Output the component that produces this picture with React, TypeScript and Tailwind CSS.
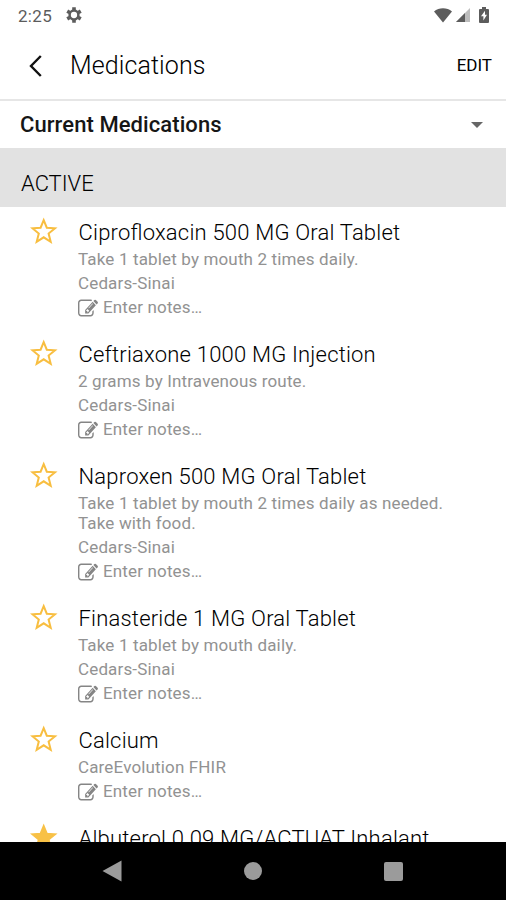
import React from "react";

interface Medication {
  name: string;
  instructions?: string;
  source?: string;
  favorite?: boolean;
}

const medications: Medication[] = [
  {
    name: "Ciprofloxacin 500 MG Oral Tablet",
    instructions: "Take 1 tablet by mouth 2 times daily.",
    source: "Cedars-Sinai",
  },
  {
    name: "Ceftriaxone 1000 MG Injection",
    instructions: "2 grams by Intravenous route.",
    source: "Cedars-Sinai",
  },
  {
    name: "Naproxen 500 MG Oral Tablet",
    instructions: "Take 1 tablet by mouth 2 times daily as needed. Take with food.",
    source: "Cedars-Sinai",
  },
  {
    name: "Finasteride 1 MG Oral Tablet",
    instructions: "Take 1 tablet by mouth daily.",
    source: "Cedars-Sinai",
  },
  { name: "Calcium", source: "CareEvolution FHIR" },
  { name: "Albuterol 0.09 MG/ACTUAT Inhalant", favorite: true },
];

const Star = ({ filled }: { filled?: boolean }) => (
  <svg
    viewBox="0 0 28 28"
    className="-mt-0.5 h-7 w-7 shrink-0"
    fill={filled ? "#f8c146" : "none"}
    stroke={filled ? "#f8c146" : "#f8be40"}
    strokeWidth="2"
  >
    <path d="M13.7 3.2 16.8 10.7 25 11.3 18.6 16.6 20.7 24.8 13.7 20.3 6.7 24.8 8.8 16.6 2.4 11.3 10.6 10.7Z" />
  </svg>
);

const EditIcon = () => (
  <svg viewBox="0 0 1792 1664" preserveAspectRatio="none" className="mt-[2px] h-5 w-5 shrink-0" fill="#858585">
    <path d="M888 1184l116-116-152-152-116 116v56h96v96h56zm440-720q-16-16-33 1l-350 350q-17 17-1 33t33-1l350-350q17-17 1-33zm80 594v190q0 119-84.5 203.5t-203.5 84.5h-832q-119 0-203.5-84.5t-84.5-203.5v-832q0-119 84.5-203.5t203.5-84.5h832q63 0 117 25 15 7 18 23 3 17-9 29l-49 49q-14 14-32 8-23-6-45-6h-832q-66 0-113 47t-47 113v832q0 66 47 113t113 47h832q66 0 113-47t47-113v-126q0-13 9-22l64-64q15-15 35-7t20 29zm-96-738l288 288-672 672h-288v-288zm444 132l-92 92-288-288 92-92q28-28 68-28t68 28l152 152q28 28 28 68t-28 68z" />
  </svg>
);

const GearIcon = () => (
  <svg viewBox="0 0 18 18" className="-mt-0.5 h-[18px] w-[18px]" fill="none" stroke="currentColor">
    <circle cx="9" cy="9" r="4.400" strokeWidth="2.500" />
    <path
      d="M9 1.200v2.800M9 14v2.800M2.250 5.100l2.400 1.400M13.350 11.500l2.400 1.400M2.250 12.900l2.400-1.400M13.350 6.500l2.400-1.400"
      strokeWidth="3.600"
    />
  </svg>
);

const StatusBar = () => (
  <div className="flex h-8 shrink-0 items-center justify-between pr-[16px] pl-[18px] text-[#5c5c5c]">
    <div className="flex items-center gap-[13px]">
      <span className="text-[17px] leading-8 tracking-[0.3px]">2:25</span>
      <GearIcon />
    </div>
    <div className="-mt-0.5 flex items-center">
      <svg viewBox="0 0 18 15" className="h-[15px] w-[18px]" fill="currentColor">
        <path d="M0 3.5C5-.7 13-.7 18 3.5L9 14.5Z" />
      </svg>
      <svg viewBox="0 0 14 14" className="ml-1 h-[14px] w-[14px]">
        <path d="M14 0v14H0Z" fill="#bdbdbd" />
        <path d="M9 5v9H0Z" fill="#5c5c5c" />
      </svg>
      <svg viewBox="0 0 10 16" className="ml-[9px] mr-[1px] h-4 w-[10px]" fill="currentColor">
        <path fillRule="evenodd" d="M3 0h4v2h2q1 0 1 1v12q0 1-1 1H1q-1 0-1-1V3q0-1 1-1h2ZM6 3.8 2 9.3h2.4V13.500L8 7.700H6Z" />
      </svg>
    </div>
  </div>
);

const MedicationRow = ({ med }: { med: Medication }) => (
  <li className="flex gap-5 pt-[11px] pr-10 pb-3 pl-[30px]">
    <Star filled={med.favorite} />
    <div className="flex min-w-0 flex-1 flex-col text-[17px] leading-5 tracking-[0.15px] text-[#929292]">
      <h2 className="pl-[0.5px] text-[22px] leading-7 font-light tracking-[0.2px] whitespace-nowrap text-black [font-feature-settings:'liga'_1]">
        {med.name}
      </h2>
      {med.instructions && <p className="mt-[2px] mb-[2px]">{med.instructions}</p>}
      {med.source && (
        <>
          <p className="mt-[2px]">{med.source}</p>
          <button className="mt-1 mb-[1px] flex h-5 items-center gap-[5px] text-left">
            <EditIcon />
            <span>Enter notes…</span>
          </button>
        </>
      )}
    </div>
  </li>
);

const App = () => {
  return (
    <div className="flex h-[900px] w-[506px] flex-col overflow-hidden bg-white font-['Roboto',sans-serif]">
      <StatusBar />
      <header className="flex h-[69px] shrink-0 items-center border-b-2 border-[#e6e6e6] pr-[14px] pl-[28px]">
        <svg viewBox="0 0 14 24" className="h-6 w-[14px]" fill="none" stroke="#111" strokeWidth="2.4">
          <path d="M12.8 2 3 12l9.8 10" />
        </svg>
        <h1 className="ml-7 flex-1 text-[25px] font-light tracking-[0.1px] text-black">Medications</h1>
        <button className="text-[17px] text-black">EDIT</button>
      </header>
      <div className="flex h-[47px] shrink-0 items-center justify-between pr-[23px] pl-5">
        <span className="text-[22px] font-medium tracking-[0.08px] text-[#161616]">Current Medications</span>
        <svg viewBox="0 0 12 6" className="h-[6px] w-3" fill="#666">
          <path d="M0 0h12L6 6Z" />
        </svg>
      </div>
      <div className="flex h-[59px] shrink-0 items-center bg-[#e2e2e2] pt-3 pl-[21px] text-[22px] font-light text-black">
        ACTIVE
      </div>
      <ul className="min-h-0 flex-1 overflow-hidden pt-[1px]">
        {medications.map((med) => (
          <MedicationRow key={med.name} med={med} />
        ))}
      </ul>
      <nav className="grid h-[58px] shrink-0 grid-cols-[183px_140px_183px] items-center bg-black">
        <svg viewBox="0 0 20 22" className="ml-[102px] h-[22px] w-5" fill="#9b9b9b">
          <path d="M19.5.5v21L.5 11Z" />
        </svg>
        <div className="h-[18px] w-[18px] justify-self-center rounded-full bg-[#9b9b9b]" />
        <div className="ml-[61px] h-[19px] w-[19px] rounded-[2px] bg-[#9b9b9b]" />
      </nav>
    </div>
  );
};

export default App;
